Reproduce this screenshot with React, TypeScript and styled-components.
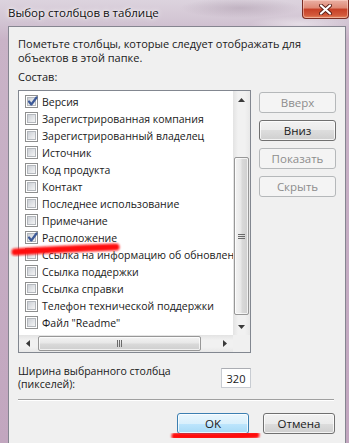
import React from 'react';
import styled, { createGlobalStyle } from 'styled-components';

const FONT = `"Segoe UI", "Open Sans", "Noto Sans", sans-serif`;

const Global = createGlobalStyle`
  html, body { margin: 0; padding: 0; width: 349px; height: 443px; overflow: hidden; }
  body { font-family: ${FONT}; font-size: 11px; color: #000; }
  * { box-sizing: border-box; }
`;

const Window = styled.div`
  position: relative;
  width: 349px;
  height: 443px;
  overflow: hidden;
  display: flex;
  flex-direction: column;
  background:
    radial-gradient(ellipse 60px 10px at 240px 8px, rgba(150, 130, 150, 0.35), transparent),
    radial-gradient(ellipse 50px 8px at 300px 24px, rgba(255, 255, 255, 0.45), transparent),
    linear-gradient(180deg, #dcd3de 0px, #d3c6d4 20px, #c9b3c7 40px, #c2a6bf 443px);
`;

const TitleBar = styled.div`
  height: 26px;
  flex: none;
  display: flex;
  align-items: flex-start;
  justify-content: space-between;
`;

const Title = styled.div`
  margin: 5px 0 0 8px;
  font-size: 11.5px;
  line-height: 16px;
  color: #111;
  text-shadow: 0 0 6px #fff, 0 0 3px #fff;
`;

const CloseButton = styled.div`
  width: 47px;
  height: 19px;
  border: 1px solid #7a2d24;
  border-top: none;
  border-radius: 0 0 4px 4px;
  background: linear-gradient(180deg, #eab0a4 0%, #de8874 45%, #c63f26 50%, #d35a3c 85%, #e58a62 100%);
  box-shadow: inset 0 0 0 1px rgba(255, 220, 210, 0.5);
  display: flex;
  align-items: center;
  justify-content: center;
`;

const Body = styled.div`
  flex: 1;
  margin: 0 3px 0 8px;
  border: 1px solid #858590;
  border-bottom: none;
  background: #f0f0f0;
  padding: 10px 9px 0 9px;
  display: flex;
  flex-direction: column;
`;

const Description = styled.div`
  font-size: 11px;
  line-height: 14px;
  color: #1a1a1a;
`;

const SectionLabel = styled.div`
  margin: 5px 0 6px;
  font-size: 11px;
  line-height: 14px;
  color: #1a1a1a;
`;

const MainRow = styled.div`
  display: grid;
  grid-template-columns: 233px 1fr;
  column-gap: 8px;
`;

const ListBox = styled.div`
  height: 263px;
  border: 1px solid #828790;
  background: #fff;
  display: grid;
  grid-template-columns: 1fr 17px;
  grid-template-rows: 1fr 17px;
  overflow: hidden;
`;

const Rows = styled.div`
  padding-top: 2px;
  overflow: hidden;
`;

const Row = styled.div`
  height: 17px;
  display: flex;
  align-items: center;
  padding-left: 6px;
  gap: 4px;
  white-space: nowrap;
  font-size: 10.5px;
  color: #1a1a1a;
`;

const Box = styled.span`
  flex: none;
  width: 13px;
  height: 13px;
  border: 1px solid #8e8f8f;
  background: #fff;
  padding: 1px;
  display: flex;
`;

const BoxInner = styled.span`
  flex: 1;
  position: relative;
  background: linear-gradient(135deg, #cbcfd5 0%, #e4e6e9 60%, #f4f4f4 100%);
  border: 1px solid #b4b8bd;
`;

const Check = styled.svg`
  position: absolute;
  left: -2px;
  top: -3px;
`;

const VScroll = styled.div`
  display: flex;
  flex-direction: column;
  background: linear-gradient(90deg, #e3e3e3 0%, #f1f1f1 30%, #f1f1f1 70%, #e8e8e8 100%);
`;

const HScroll = styled.div`
  display: flex;
  flex-direction: row;
  align-items: stretch;
  background: linear-gradient(180deg, #e3e3e3 0%, #f1f1f1 30%, #f1f1f1 70%, #e8e8e8 100%);
`;

const Corner = styled.div`
  background: #f0f0f0;
`;

const Arrow = styled.div`
  flex: none;
  width: 17px;
  height: 17px;
  display: flex;
  align-items: center;
  justify-content: center;
`;

const Spacer = styled.div<{ $size: number }>`
  flex: none;
  width: ${(p) => p.$size}px;
  height: ${(p) => p.$size}px;
`;

const VThumb = styled.div<{ $len: number }>`
  flex: none;
  height: ${(p) => p.$len}px;
  margin: 0 1px;
  border: 1px solid #979797;
  border-radius: 2px;
  background: linear-gradient(90deg, #f3f3f3 0%, #e8e8e8 45%, #d9d9d9 55%, #cfcfcf 100%);
  box-shadow: inset 0 0 0 1px rgba(255, 255, 255, 0.7);
  display: flex;
  align-items: center;
  justify-content: center;
`;

const HThumb = styled.div<{ $len: number }>`
  flex: none;
  width: ${(p) => p.$len}px;
  margin: 1px 0;
  border: 1px solid #979797;
  border-radius: 2px;
  background: linear-gradient(180deg, #f3f3f3 0%, #e8e8e8 45%, #d9d9d9 55%, #cfcfcf 100%);
  box-shadow: inset 0 0 0 1px rgba(255, 255, 255, 0.7);
  display: flex;
  align-items: center;
  justify-content: center;
`;

const Fill = styled.div`
  flex: 1;
`;

const ButtonColumn = styled.div`
  padding-top: 2px;
  display: flex;
  flex-direction: column;
  gap: 7px;
`;

const Button = styled.div<{ $variant?: 'normal' | 'disabled' | 'default'; $width?: number }>`
  height: 21px;
  width: ${(p) => (p.$width ? `${p.$width}px` : 'auto')};
  border-radius: 3px;
  display: flex;
  align-items: center;
  justify-content: center;
  font-size: 11.5px;
  border: 1px solid
    ${(p) => (p.$variant === 'disabled' ? '#b5b8ba' : p.$variant === 'default' ? '#3c7fb1' : '#707070')};
  color: ${(p) => (p.$variant === 'disabled' ? '#8d8d8d' : '#1a1a1a')};
  background: ${(p) =>
    p.$variant === 'disabled'
      ? '#f4f4f4'
      : p.$variant === 'default'
      ? 'linear-gradient(180deg, #eaf6fd 0%, #d9f0fc 50%, #bee6fd 50%, #a7d9f5 100%)'
      : 'linear-gradient(180deg, #f2f2f2 0%, #ebebeb 50%, #dddddd 50%, #cfcfcf 100%)'};
  box-shadow: ${(p) => (p.$variant === 'disabled' ? 'none' : 'inset 0 0 0 1px rgba(255,255,255,0.75)')};
`;

const WidthRow = styled.div`
  margin-top: 12px;
  width: 233px;
  display: flex;
  align-items: center;
  justify-content: space-between;
`;

const WidthLabel = styled.div`
  font-size: 10.5px;
  line-height: 13px;
  color: #1a1a1a;
`;

const NumberBox = styled.div`
  width: 30px;
  height: 20px;
  background: #fff;
  border: 1px solid #c8ccd2;
  border-top-color: #abadb3;
  display: flex;
  align-items: center;
  justify-content: center;
  font-size: 11px;
  color: #1a1a1a;
`;

const Separator = styled.div`
  margin-top: 8px;
  height: 2px;
  border-top: 1px solid #a0a0a0;
  border-bottom: 1px solid #ffffff;
  margin-right: 2px;
`;

const Footer = styled.div`
  margin-top: 12px;
  display: flex;
  justify-content: flex-end;
  gap: 14px;
  padding-right: 1px;
`;

const Annotations = styled.svg`
  position: absolute;
  left: 0;
  top: 0;
  pointer-events: none;
`;

const items: { label: string; checked?: boolean }[] = [
  { label: 'Версия', checked: true },
  { label: 'Зарегистрированная компания' },
  { label: 'Зарегистрированный владелец' },
  { label: 'Источник' },
  { label: 'Код продукта' },
  { label: 'Контакт' },
  { label: 'Последнее использование' },
  { label: 'Примечание' },
  { label: 'Расположение', checked: true },
  { label: 'Ссылка на информацию об обновлениях' },
  { label: 'Ссылка поддержки' },
  { label: 'Ссылка справки' },
  { label: 'Телефон технической поддержки' },
  { label: 'Файл "Readme"' },
];

const Tri = ({ dir }: { dir: 'up' | 'down' | 'left' | 'right' }) => {
  const pts =
    dir === 'up'
      ? '0,4 7,4 3.5,0'
      : dir === 'down'
      ? '0,0 7,0 3.5,4'
      : dir === 'left'
      ? '4,0 4,7 0,3.5'
      : '0,0 0,7 4,3.5';
  const w = dir === 'up' || dir === 'down' ? 7 : 4;
  const h = dir === 'up' || dir === 'down' ? 4 : 7;
  return (
    <svg width={w} height={h} viewBox={`0 0 ${w} ${h}`}>
      <polygon points={pts} fill="#3a3a3a" />
    </svg>
  );
};

const CheckBox = ({ checked }: { checked?: boolean }) => (
  <Box>
    <BoxInner>
      {checked && (
        <Check width="13" height="13" viewBox="0 0 13 13">
          <path d="M3 6.5 L5.3 9.5 L10.5 2.5" fill="none" stroke="#3d5a98" strokeWidth="2.2" strokeLinecap="round" strokeLinejoin="round" />
        </Check>
      )}
    </BoxInner>
  </Box>
);

export default function App() {
  return (
    <>
      <Global />
      <Window>
        <TitleBar>
          <Title>Выбор столбцов в таблице</Title>
          <CloseButton>
            <svg width="13" height="11" viewBox="0 0 13 11">
              <path d="M2 1.5 L11 9.5 M11 1.5 L2 9.5" stroke="#5a1f18" strokeWidth="4" strokeLinecap="round" />
              <path d="M2 1.5 L11 9.5 M11 1.5 L2 9.5" stroke="#ffffff" strokeWidth="2.2" strokeLinecap="round" />
            </svg>
          </CloseButton>
        </TitleBar>
        <Body>
          <Description>
            Пометьте столбцы, которые следует отображать для
            <br />
            объектов в этой папке.
          </Description>
          <SectionLabel>Состав:</SectionLabel>
          <MainRow>
            <ListBox>
              <Rows>
                {items.map((it) => (
                  <Row key={it.label}>
                    <CheckBox checked={it.checked} />
                    <span>{it.label}</span>
                  </Row>
                ))}
              </Rows>
              <VScroll>
                <Arrow>
                  <Tri dir="up" />
                </Arrow>
                <Spacer $size={49} />
                <VThumb $len={158}>
                  <svg width="7" height="7" viewBox="0 0 7 7">
                    <path d="M0 1.5H7M0 3.5H7M0 5.5H7" stroke="#6a6a6a" strokeWidth="1" />
                  </svg>
                </VThumb>
                <Fill />
                <Arrow>
                  <Tri dir="down" />
                </Arrow>
              </VScroll>
              <HScroll>
                <Arrow>
                  <Tri dir="left" />
                </Arrow>
                <Spacer $size={2} />
                <HThumb $len={163}>
                  <svg width="7" height="7" viewBox="0 0 7 7">
                    <path d="M1.5 0V7M3.5 0V7M5.5 0V7" stroke="#6a6a6a" strokeWidth="1" />
                  </svg>
                </HThumb>
                <Fill />
                <Arrow>
                  <Tri dir="right" />
                </Arrow>
              </HScroll>
              <Corner />
            </ListBox>
            <ButtonColumn>
              <Button $variant="disabled">Вверх</Button>
              <Button>Вниз</Button>
              <Button $variant="disabled">Показать</Button>
              <Button $variant="disabled">Скрыть</Button>
            </ButtonColumn>
          </MainRow>
          <WidthRow>
            <WidthLabel>
              Ширина выбранного столбца
              <br />
              (пикселей):
            </WidthLabel>
            <NumberBox>320</NumberBox>
          </WidthRow>
          <Separator />
          <Footer>
            <Button $variant="default" $width={72}>
              OK
            </Button>
            <Button $width={72}>Отмена</Button>
          </Footer>
        </Body>
        <Annotations width="349" height="443" viewBox="0 0 349 443">
          <defs>
            <filter id="soft" x="-10%" y="-100%" width="120%" height="300%">
              <feGaussianBlur stdDeviation="0.8" />
            </filter>
          </defs>
          <path d="M15 252 Q 60 249 116 247" stroke="#ff1010" strokeWidth="7" strokeLinecap="round" fill="none" filter="url(#soft)" />
          <path d="M175 436 Q 215 437 256 435" stroke="#ff1010" strokeWidth="7" strokeLinecap="round" fill="none" filter="url(#soft)" />
        </Annotations>
      </Window>
    </>
  );
}
